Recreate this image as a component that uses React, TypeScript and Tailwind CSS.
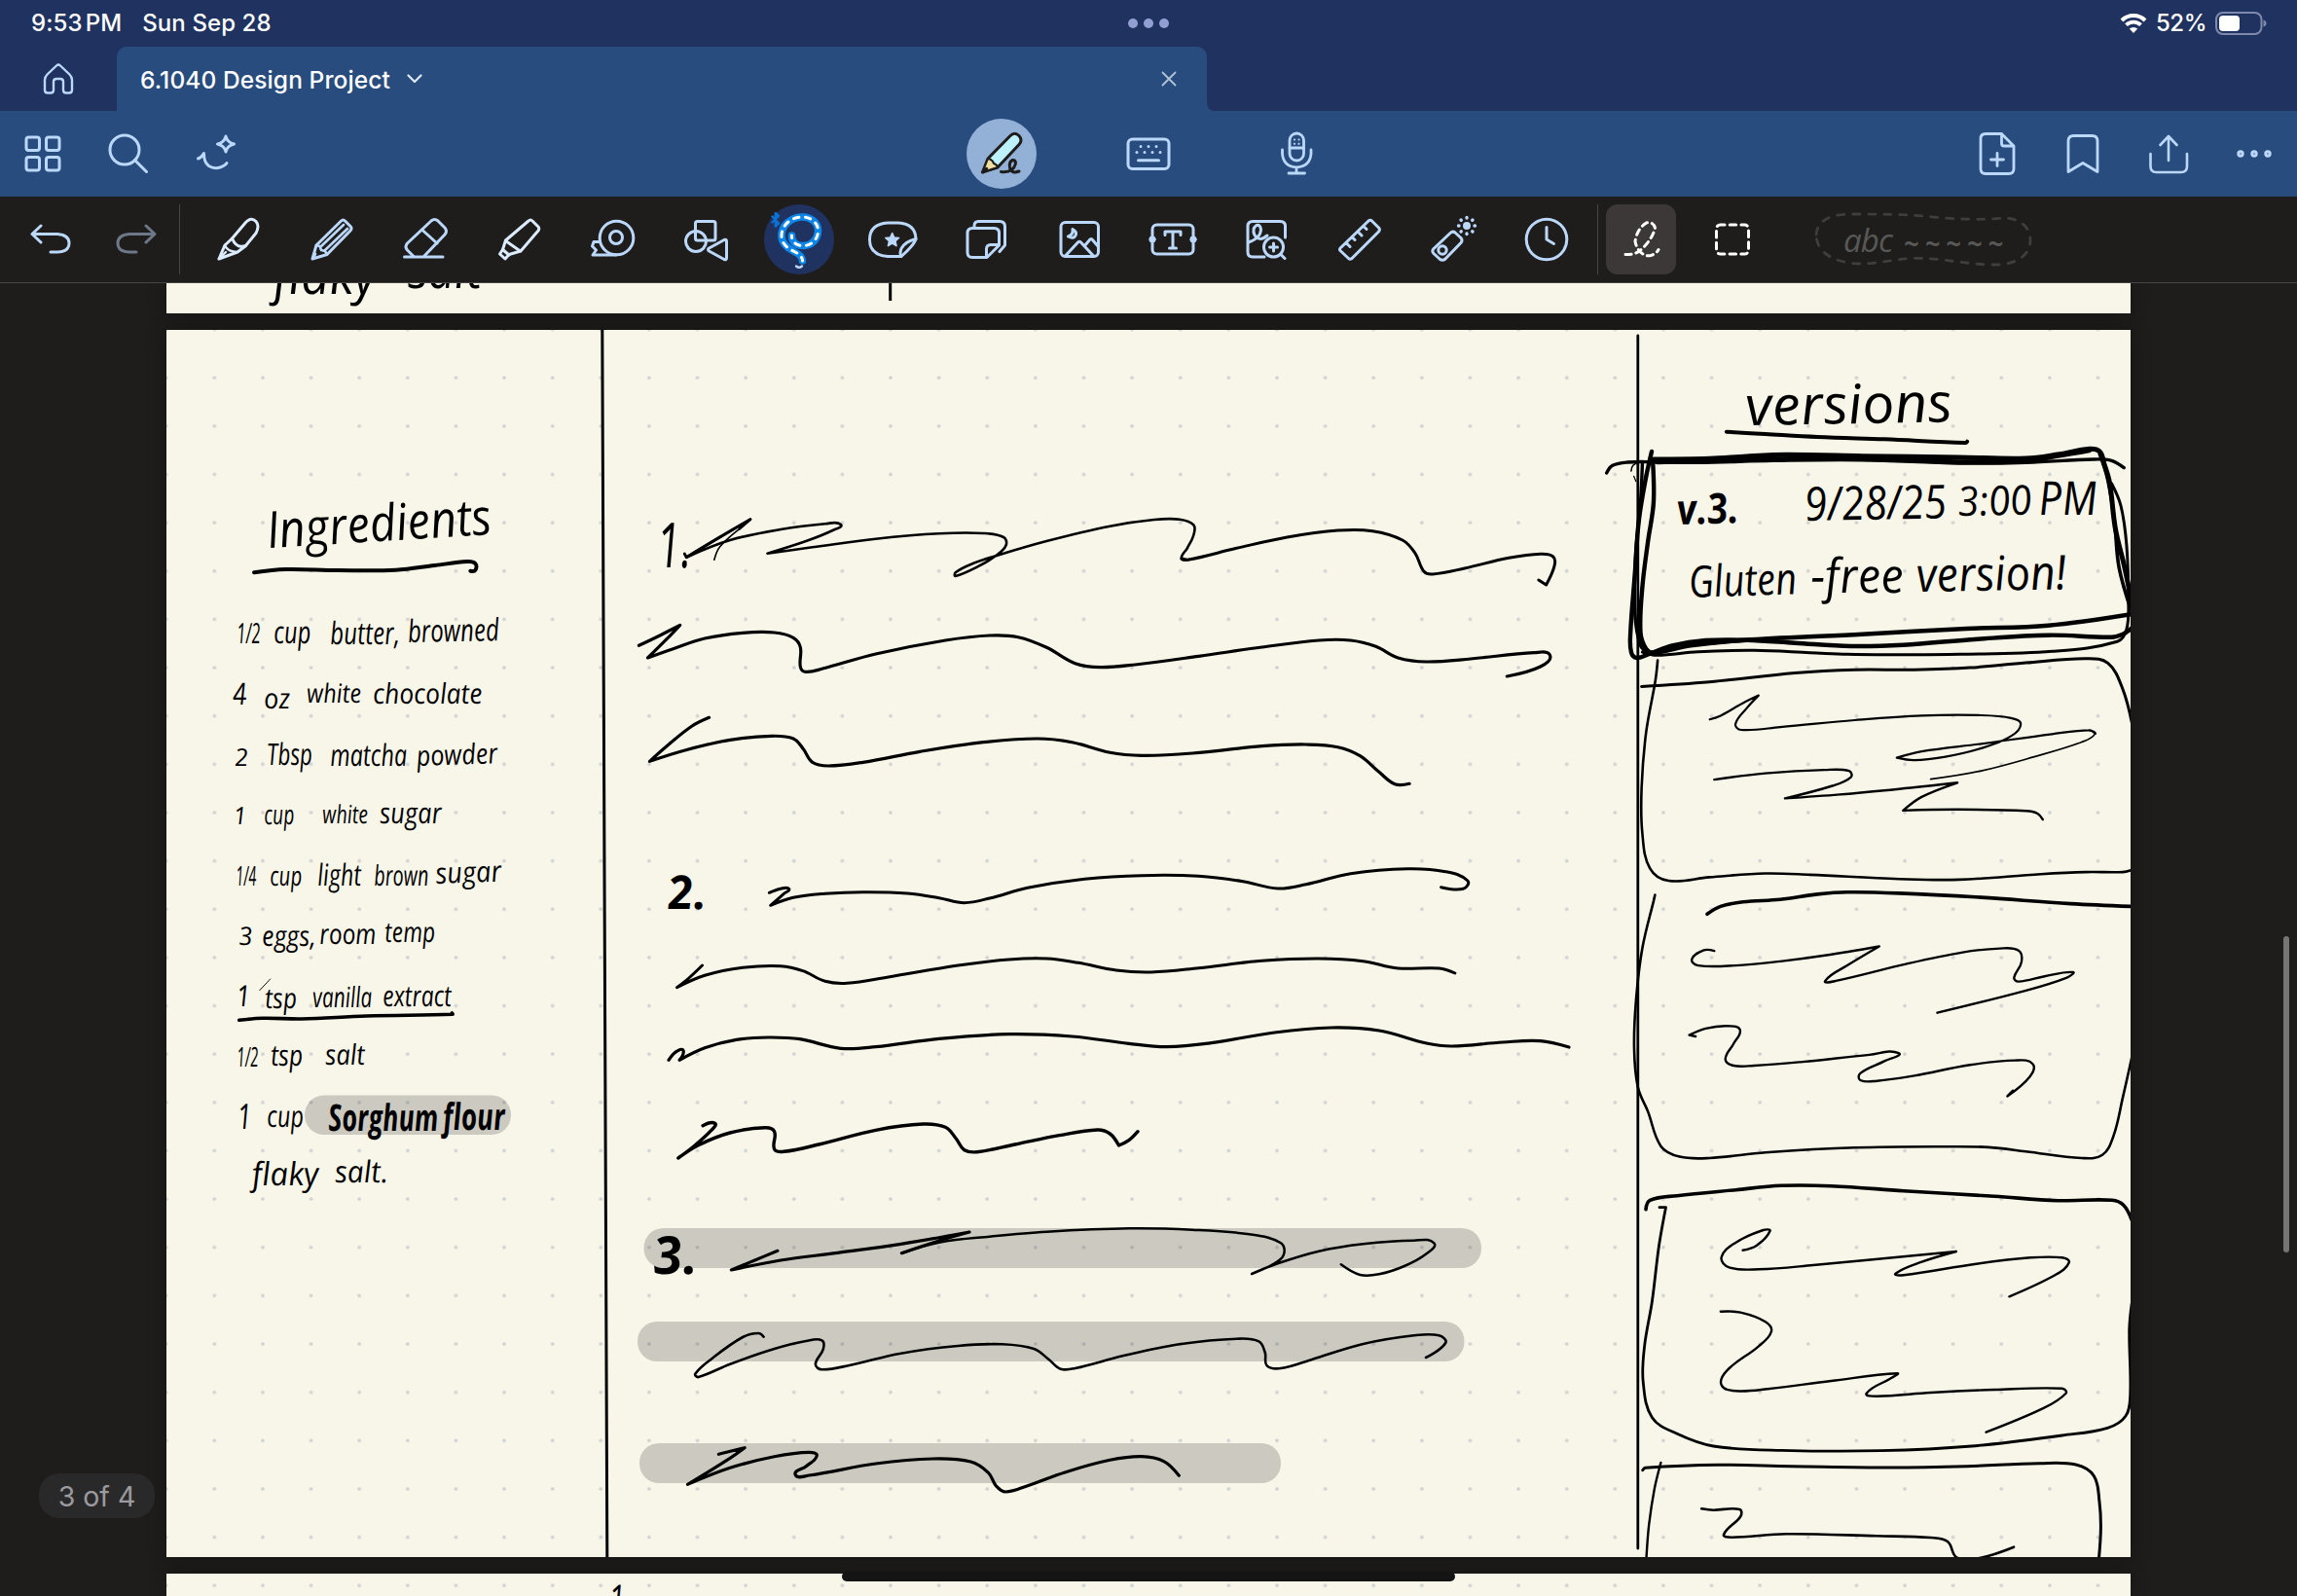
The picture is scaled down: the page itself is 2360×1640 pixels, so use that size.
import React, { useLayoutEffect, useRef, useState } from "react";

type Pt = { x: number; y: number; corner: boolean };
type Stroke = [number, string];
type Patch = { x: number; y: number; sx: number; sy: number; strokes: Stroke[] };
type Word = { t: string; x: number; y: number; size: number; w?: number; bold?: boolean; tilt?: number };

/* Turns a list of pen samples into a smooth curve; "!" after a sample keeps it sharp. */
function inkPath(samples: string, p: Patch): string {
  const pts: Pt[] = samples.trim().split(/\s+/).map((s) => {
    const corner = s.endsWith("!");
    const [a, b] = s.replace("!", "").split(",").map(Number);
    return { x: p.x + a / p.sx, y: p.y + b / p.sy, corner };
  });
  const tangent = (i: number) => {
    const a = pts[Math.max(0, i - 1)];
    const b = pts[Math.min(pts.length - 1, i + 1)];
    if (pts[i].corner || i === 0 || i === pts.length - 1) return { x: 0, y: 0 };
    const l = Math.hypot(b.x - a.x, b.y - a.y) || 1;
    return { x: (b.x - a.x) / l, y: (b.y - a.y) / l };
  };
  let d = `M${pts[0].x.toFixed(1)} ${pts[0].y.toFixed(1)}`;
  for (let i = 0; i < pts.length - 1; i++) {
    const a = pts[i];
    const b = pts[i + 1];
    const k = Math.hypot(b.x - a.x, b.y - a.y) * 0.36;
    const ta = tangent(i);
    const tb = tangent(i + 1);
    d += `C${(a.x + ta.x * k).toFixed(1)} ${(a.y + ta.y * k).toFixed(1)} ${(b.x - tb.x * k).toFixed(1)} ${(b.y - tb.y * k).toFixed(1)} ${b.x.toFixed(1)} ${b.y.toFixed(1)}`;
  }
  return d;
}

const patches: Patch[] = [
  {
    x: 160, y: 480, sx: 3, sy: 3,
    strokes: [[4, "303,325 400,315 560,318 740,317 860,303 960,291 985,297 985,318 970,320"]],
  },
  {
    x: 160, y: 860, sx: 3, sy: 3,
    strokes: [
      [3.6, "257,565 330,559 450,561 650,552 915,547 913,543"],
      [1, "320,473 353,438"],
    ],
  },
  {
    x: 620, y: 500, sx: 1.5373, sy: 3,
    strokes: [
      [1.6, "175,226 184,185 215,130"],
      [2.8, "128,207 131,218! 180,160 232,101!"],
      [2.6, "215,130 232,101! 131,218! 200,165 280,132 350,115 375,117 362,135 320,168 259,206! 330,187 430,161 530,145 600,144 632,156 636,180 622,210 590,248 556,276 556,265 580,240 622,212 700,168 800,122 870,102 910,101 932,118 932,150 922,190 913,222 925,225"],
      [3, "913,222 925,225 1000,190 1080,156 1160,135 1215,137 1262,165 1282,205 1296,262 1310,270 1360,252 1430,220 1480,208 1500,216 1502,245 1489,303! 1477,288"],
      [3.2, "56,490 90,458 121,427! 100,470 70,528! 110,500 160,468 220,451 270,450 300,466 311,495 311,555 319,571 345,562 430,516 540,474 610,459 655,464 700,496 745,545 785,557 840,549 940,523 1040,495 1130,474 1180,474 1220,493 1255,528 1300,540 1370,531 1470,512 1495,520 1480,555 1427,585"],
      [3.2, "167,712 140,738 100,800 73,847! 130,812 200,781 265,769 300,777 316,810 330,850 355,861 410,850 500,817 600,788 685,777 740,788 800,820 850,829 930,822 1040,800 1110,795 1160,803 1195,830 1225,880 1250,917 1273,916"],
    ],
  },
  {
    x: 620, y: 860, sx: 1.5373, sy: 3,
    strokes: [
      [3, "262,172 280,160 293,160 285,175 264,211! 300,187 350,175 410,170 480,174 530,188 570,203 610,189 670,157 760,130 850,119 940,121 1010,137 1065,159 1110,146 1180,113 1270,98 1330,107 1365,135 1358,160 1323,155"],
      [3, "156,396 135,435 116,464! 160,427 220,403 280,398 315,413 350,445 385,451 450,432 560,396 640,378 700,375 750,388 810,411 865,417 940,404 1040,382 1130,375 1200,383 1255,405 1320,405 1345,420"],
      [3.2, "103,688 115,662 126,658 120,688! 160,650 210,625 260,618 310,623 375,652 430,647 530,622 640,608 740,615 830,637 890,647 960,635 1060,603 1150,588 1225,597 1300,636 1340,645 1420,633 1480,629 1525,648"],
      [3.4, "157,890 176,883 170,905 145,950 118,990! 150,950 200,912 255,896 270,908 270,962 285,970 340,948 430,904 505,885 540,895 557,930 570,965 590,971 650,948 720,920 780,903 800,915 814,951! 830,935 844,908"],
    ],
  },
  {
    x: 620, y: 1220, sx: 1.5373, sy: 3,
    strokes: [
      [3.2, "275,196 240,224 202,255! 280,225 370,202 470,175 578,138! 530,165 471,203!"],
      [2.5, "471,203! 530,170 610,152 700,137 830,127 930,131 1020,145 1070,172 1074,210 1055,240 1024,267! 1065,235 1130,197 1200,175 1280,164 1312,172 1300,205 1265,243 1225,268 1195,270 1165,238"],
      [2.6, "253,461 245,450 220,462 170,530 145,575 150,585 200,545 270,498 320,474 345,472 347,500 335,545 345,562 390,548 470,512 560,489 630,484 680,498 703,530 722,560 745,558 820,520 910,484 1000,467 1035,475 1045,510 1048,550 1070,558 1120,530 1200,483 1280,457 1320,457 1330,480 1299,525"],
      [3.2, "182,823 223,803! 200,835 133,916! 200,865 270,830 325,817 337,828 320,860 303,886 325,888 430,852 520,837 580,846 608,880 620,920 635,939 670,920 730,878 800,841 850,830 885,845 909,889"],
    ],
  },
  {
    x: 1630, y: 330, sx: 2.6133, sy: 3,
    strokes: [
      [4, "376,341 480,348 620,357 800,364 1018,375 1022,371"],
      [3.4, "54,468 70,445 110,435 180,434 300,436 500,430 740,428 1000,438 1180,436 1360,426 1410,430 1443,452"],
      [5, "180,426 330,424 430,417 540,412 740,416 1000,420 1180,423 1270,410 1350,394 1378,402 1390,440 1405,500 1420,640 1445,760 1466,880"],
      [5, "190,434 330,430 500,426 740,422 1000,434 1180,430 1270,414 1350,398"],
      [3.6, "1378,410 1400,490 1418,620 1430,760 1465,900"],
      [3, "1410,500 1435,570 1450,690 1455,860 1450,950 1425,988 1250,1018 1000,1027 840,1028 700,1027 600,1022 450,1015 300,1019 190,1030 150,1020"],
      [4.4, "175,402 160,480 140,620 130,780 118,960 120,1020 135,1038 170,1025 230,1000 320,984 430,983 560,992 710,1002 850,998 1050,980 1240,968 1410,974 1440,965 1465,945"],
      [4.4, "178,430 180,560 165,680 150,820 145,960 160,1010 180,1022 280,1000 440,982 740,965 1020,948 1240,938 1465,903"],
      [3.4, "150,440 145,560 132,720 130,900 145,1000 170,1025"],
      [3.4, "180,1022 220,1008 340,992 440,984"],
      [1.6, "145,432 125,445 120,462"],
      [1.2, "127,478 133,494"],
    ],
  },
  {
    x: 1630, y: 660, sx: 2.6133, sy: 2.8,
    strokes: [
      [3, "148,127 330,114 560,88 720,79 880,79 1030,73 1180,59 1340,47 1400,60 1440,135 1465,235"],
      [2.6, "191,52 185,110 160,260 148,420 150,550 170,650 220,686 330,676 480,665 600,669 840,681 1000,683 1220,667 1340,661 1440,661 1465,655"],
      [2.2, "331,222 360,211 420,175 462,153! 430,190 400,235 415,252 520,244 720,224 900,211 1060,210 1140,218 1166,235 1140,270 1060,305 960,330 880,339 833,332! 900,314 1060,292 1250,264 1350,253 1366,263"],
      [1.7, "1350,253 1366,263 1330,287 1200,330 1060,370 924,394"],
      [2.4, "343,395 480,377 640,367 705,370 710,388 660,413 533,449! 680,438 840,422 996,404! 900,445 850,484! 1000,481 1180,485 1210,492 1225,510"],
      [3.6, "324,782 360,760 420,747 520,740 620,725 700,719 840,722 1060,734 1300,752 1465,760"],
      [2.6, "184,727 180,745 150,880 133,1030 128,1170 138,1280 165,1350 200,1450 250,1480 330,1484 480,1468 720,1454 980,1451 1080,1453 1180,1465 1330,1484 1385,1475 1415,1420 1440,1310 1465,1190"],
      [2.4, "343,888 315,886 283,912 300,930 400,930 520,918 640,901 786,875! 700,930 641,974 670,974 860,925 1010,892 1110,881 1160,887 1168,920 1148,965 1160,976 1230,961 1306,949 1290,965 1180,1002 942,1066"],
      [2.4, "293,1134 276,1130! 320,1111 380,1104 412,1115 395,1155 373,1200 395,1218 450,1218 580,1207 760,1187 838,1182 800,1205 735,1240 735,1260 780,1262 880,1247 1030,1216 1150,1203 1198,1213 1190,1250 1130,1306! 1145,1290"],
    ],
  },
  {
    x: 1630, y: 1180, sx: 2.148, sy: 3,
    strokes: [
      [3.6, "131,188 140,160 200,146 330,128 430,115 540,116 700,131 900,148 1040,161 1160,160 1185,175 1203,220"],
      [2.8, "161,182 175,182! 160,300 145,470 128,610 125,720 145,830 200,880 280,918 430,931 650,932 850,918 1050,885 1150,862 1190,825 1200,760 1198,560 1203,480"],
      [2.4, "345,314 375,300 405,255 390,252 330,290 298,335 315,367 380,373 500,360 816,318! 740,350 682,386 700,391 860,356 980,337 1050,337 1065,352 1035,390 933,457"],
      [2.4, "296,503 340,506 395,535 408,565 380,610 310,685 298,730 330,748 400,742 540,717 686,694 670,710 618,755 640,764 760,753 900,744 1050,740 1058,755 1010,800 882,875"],
      [3, "124,992 130,985 290,976 450,980 670,984 840,980 1000,971 1080,975 1120,1010 1132,1090 1135,1170 1131,1264"],
      [2.4, "164,969 150,1050 138,1160 132,1264"],
      [2.6, "254,1111 280,1115 338,1113 340,1135 303,1190 320,1199 440,1189 640,1195 760,1200 797,1212 818,1262 870,1262 943,1229"],
    ],
  },
];

const words: Word[] = [
  { t: "Ingredients", x: 277, y: 563, size: 52, w: 231, tilt: -3.5 },
  { t: "1/2", x: 244, y: 661, size: 29, w: 24 },
  { t: "cup", x: 282, y: 661, size: 32, w: 38 },
  { t: "butter,", x: 340, y: 662, size: 32, w: 72 },
  { t: "browned", x: 420, y: 660, size: 32, w: 94, tilt: -1 },
  { t: "4", x: 240, y: 725, size: 31, w: 14 },
  { t: "oz", x: 272, y: 728, size: 29, w: 27 },
  { t: "white", x: 316, y: 722, size: 27, w: 56 },
  { t: "chocolate", x: 384, y: 723, size: 29, w: 112 },
  { t: "2", x: 242, y: 787, size: 25, w: 14 },
  { t: "Tbsp", x: 275, y: 787, size: 31, w: 47 },
  { t: "matcha", x: 340, y: 788, size: 31, w: 79 },
  { t: "powder", x: 429, y: 787, size: 29, w: 83, tilt: -2 },
  { t: "1", x: 241, y: 847, size: 25, w: 13 },
  { t: "cup", x: 272, y: 847, size: 28, w: 31 },
  { t: "white", x: 332, y: 846, size: 26, w: 47 },
  { t: "sugar", x: 391, y: 847, size: 30, w: 64 },
  { t: "1/4", x: 243, y: 910, size: 28, w: 21 },
  { t: "cup", x: 278, y: 910, size: 28, w: 33 },
  { t: "light", x: 327, y: 911, size: 31, w: 45 },
  { t: "brown", x: 385, y: 910, size: 29, w: 56 },
  { t: "sugar", x: 449, y: 909, size: 30, w: 68, tilt: -2 },
  { t: "3", x: 246, y: 971, size: 26, w: 14 },
  { t: "eggs,", x: 270, y: 972, size: 29, w: 55 },
  { t: "room", x: 329, y: 970, size: 29, w: 58 },
  { t: "temp", x: 396, y: 968, size: 29, w: 52 },
  { t: "1", x: 244, y: 1035, size: 30, w: 14 },
  { t: "tsp", x: 273, y: 1036, size: 29, w: 33 },
  { t: "vanilla", x: 322, y: 1035, size: 29, w: 61 },
  { t: "extract", x: 394, y: 1035, size: 30, w: 71 },
  { t: "1/2", x: 244, y: 1096, size: 28, w: 22 },
  { t: "tsp", x: 279, y: 1096, size: 30, w: 33 },
  { t: "salt", x: 335, y: 1094, size: 29, w: 41 },
  { t: "1", x: 245, y: 1161, size: 36, w: 14 },
  { t: "cup", x: 275, y: 1159, size: 31, w: 38 },
  { t: "Sorghum", x: 338, y: 1162, size: 38, w: 113, bold: true },
  { t: "flour", x: 456, y: 1161, size: 38, w: 64, bold: true },
  { t: "flaky", x: 260, y: 1218, size: 33, w: 69 },
  { t: "salt.", x: 345, y: 1216, size: 31, w: 55 },
  { t: "1.", x: 677, y: 584, size: 64, w: 34 },
  { t: "2.", x: 688, y: 935, size: 48, w: 39, bold: true },
  { t: "3.", x: 673, y: 1309, size: 54, w: 45, bold: true },
  { t: "versions", x: 1796, y: 437, size: 56, w: 212, tilt: -1 },
  { t: "v.3.", x: 1725, y: 539, size: 43, w: 63, bold: true, tilt: -2 },
  { t: "9/28/25", x: 1856, y: 536, size: 48, w: 146, tilt: -1 },
  { t: "3:00", x: 2013, y: 530, size: 42, w: 76, tilt: -1 },
  { t: "PM", x: 2096, y: 530, size: 48, w: 60 },
  { t: "Gluten", x: 1737, y: 614, size: 45, w: 111, tilt: -2 },
  { t: "-free", x: 1862, y: 610, size: 49, w: 96 },
  { t: "version!", x: 1971, y: 609, size: 49, w: 154, tilt: -1 },
];

function HandText({ word, left, top }: { word: Word; left: number; top: number }) {
  const ref = useRef<HTMLSpanElement>(null);
  const [scale, setScale] = useState(1);
  useLayoutEffect(() => {
    if (ref.current && word.w) setScale(word.w / ref.current.offsetWidth);
  }, [word.w]);
  return (
    <span
      ref={ref}
      className={
        "absolute block origin-bottom-left whitespace-pre font-['Open_Sans','Noto_Sans',sans-serif] italic leading-none text-black " +
        (word.bold ? "font-bold" : "font-medium")
      }
      style={{
        left: word.x - left,
        top: word.y - top - word.size * 0.888,
        fontSize: word.size,
        transform: `rotate(${word.tilt ?? 0}deg) scaleX(${scale}) skewX(5deg)`,
      }}
    >
      {word.t}
    </span>
  );
}

function Paper({ id, top, height, words: list, children }: { id: string; top: number; height: number; words: Word[]; children?: React.ReactNode }) {
  return (
    <section
      className="relative w-[2018px] shrink-0 overflow-hidden bg-[#f8f6e9] shadow-[0_0_20px_rgba(0,0,0,0.3)]"
      style={{ height }}
    >
      <svg className="absolute inset-0" width={2018} height={height} viewBox={`171 ${top} 2018 ${height}`} fill="none">
        <defs>
          <pattern id={id} x="145.9" y="313.7" width="49.62" height="49.64" patternUnits="userSpaceOnUse">
            <circle cx="24.81" cy="24.82" r="1.85" fill="#cfd0d1" />
          </pattern>
        </defs>
        <rect x="171" y={top} width="2018" height={height} fill={`url(#${id})`} />
        {children}
      </svg>
      {list.map((w, i) => (
        <HandText key={i} word={w} left={171} top={top} />
      ))}
    </section>
  );
}

function Icon({ children, w = 3, color = "#bbd8fa" }: { children: React.ReactNode; w?: number; color?: string }) {
  return (
    <svg className="block size-[72px] shrink-0" viewBox="0 0 72 72" fill="none" stroke={color} strokeWidth={w} strokeLinecap="round" strokeLinejoin="round">
      {children}
    </svg>
  );
}

const toolIcons: React.ReactNode[] = [
  <g stroke="#dcebfd"><path d="M29.500 35L43.500 18.500Q49 12.500 54 17.500Q58 22 54 29.500L43.500 42.500Q34 46 29.500 35Z" /><path d="M29.500 35L22 42L16 56L35 49L43 43" /><path d="M22 42Q24 48 34 49M16 56L23 49" strokeWidth={2.400} /></g>,
  <g><path d="M16 56L20 42L45.500 17Q47.500 15 49.500 17L55 22.500Q57 24.500 55 27L31 51.500Z" /><path d="M20 42L23.500 43L25 47L29 48L31 51.500M24.500 43.500L48 21M28.500 47.500L52 25M16.500 55.500L19 51" strokeWidth={2.600} /></g>,
  <g><path d="M35 53L56 31Q59 27.500 56 24L49 17Q45.500 14 42 17L17.500 40Q14.500 43.500 17.500 47L23.500 53" /><path d="M32.500 26L48 40M14.500 54H54" /></g>,
  <g stroke="#dcebfd"><path d="M22.500 37L46 17Q48 15 50 17L56 23Q57.500 25 56 27L38 48L26 51.500L22 56L16.500 51L19.500 46.500Z" /><path d="M22.500 37.500L37.500 48M19.500 46.500L26 52" /></g>,
  <g><circle cx="40.500" cy="34.500" r="17.300" /><circle cx="40" cy="34" r="6.500" /><path d="M40 52H16L19.500 47L15.500 43L17 38.500H23.500" /></g>,
  <g><rect x="25.500" y="17.500" width="20.500" height="19.500" rx="2" /><circle cx="26" cy="38" r="10.500" /><path d="M55 36.500L39.500 45Q37.500 46.500 39.500 48L55 56.500Q57.500 57.500 57.500 55V38Q57.500 35.500 55 36.500Z" /></g>,
  null,
  <g><path d="M31 19H42Q59.500 20 60 35.500Q58 42 45 53.500H31Q12.500 52 12.500 36.200T31 19Z" /><path d="M45 53.500Q43 51 45 45.500Q49 38 60 35.500" /><path d="M35.700 29.500l2.100 4.500 4.800.5-3.600 3.300 1 4.900-4.300-2.500-4.300 2.500 1-4.900-3.600-3.300 4.800-.5z" fill="#bbd8fa" strokeWidth={1.500} /></g>,
  <g><path d="M24 24V22Q24 17.500 28.500 17.500H50Q55.500 17.500 55.500 23V42L50 48.500" /><path d="M22 24.500H44.500Q49.500 24.500 49.500 29.500V42L37 54.500H22Q17 54.500 17 49.500V29.500Q17 24.500 22 24.500ZM36.500 54V46Q36.500 41.500 41 41.500H49.500" /></g>,
  <g><rect x="17" y="18.500" width="38.500" height="35" rx="4.500" /><path d="M29 25.500Q34 28 32 32T24.500 33Q30 31 29 25.500ZM21.500 53L34.500 39Q36 37.500 37.500 39L50.500 53M41.500 42.500L46.500 36.500Q48 34.500 49.500 36.500L55 43" /></g>,
  <g><rect x="15" y="21" width="42" height="30" rx="4.500" /><circle cx="15" cy="36" r="3.200" fill="#bbd8fa" strokeWidth={1} /><circle cx="57" cy="36" r="3.200" fill="#bbd8fa" strokeWidth={1} /><path d="M28 31.500V28H44V31.500M36 28V45M32.500 45H39.500" /></g>,
  <g><path d="M55.500 34V22.500Q55.500 17.500 50.500 17.500H22Q17 17.500 17 22.500V49Q17 54 22 54H34" /><path d="M17.500 39Q30 35 30.500 26Q30 20.500 26 21.500Q21 25 24 31.500Q29 39 37 32" /><circle cx="43.500" cy="44" r="10" /><path d="M50.500 51L55 55.500M43.500 40V48M39.500 44H47.500" /></g>,
  <g><path d="M16 45L45 17Q47 15.500 48.500 17L56 24.500Q57 26 55.500 28L28 55.500Q26 57 24.500 55.500L16 47.500Q15 46.500 16 45ZM22 39.500L26 43.500M28 33.500L31 36.500M34 28L38 32M40 22.500L43 25.500" /></g>,
  <g><path d="M15.500 46L33 29.500Q35.500 27 38 29L44 34.500Q46 37 44 39.500L28 56Q25 58.500 22 56L16 50.500Q14 48.500 15.500 46Z" /><circle cx="25" cy="47" r="4.200" /><circle cx="50" cy="22" r="3" fill="#bbd8fa" strokeWidth={2} /><path d="M50 13.500V14M50 30V30.500M41.500 22H42M58 22H58.500M44 16L44.300 16.300M56 16L55.700 16.300M44 28L44.300 27.700M56 28L55.700 27.700" strokeWidth={3.400} /></g>,
  <g><circle cx="36" cy="36" r="20.800" /><path d="M36 23.500V36L43.500 40.500" /></g>,
];

function LassoTool() {
  const loop = "M28.500 32C28 38 33 43 41 42.500C49 42 55 36 55.500 28C56 19 48 12.500 38.500 13C27 13.500 17.500 22 18 33C18.500 41 24 45 31 48.500C36 51 39.500 54 39.500 58";
  return (
    <div className="relative size-[72px] rounded-full bg-[#20325f]">
      <Icon>
        <path d={loop} stroke="#0d86ea" strokeWidth={7.500} />
        <path d={loop} stroke="#fff" strokeWidth={3} strokeDasharray="5.500 6.500" strokeDashoffset="-9" />
        <path d="M33 63.500Q36 66 39 63.500" stroke="#bbd8fa" strokeWidth={2.400} />
        <path d="M8.500 12.500L15 19.500L11.800 22.500V9L15 12L8.500 18.500" stroke="#0a72d4" strokeWidth={2.400} />
      </Icon>
    </div>
  );
}

function Cell({ children }: { children: React.ReactNode }) {
  return <button className="flex h-[88px] w-[88px] shrink-0 items-center justify-center">{children}</button>;
}

export default function App() {
  return (
    <div className="flex h-[1640px] w-[2360px] flex-col overflow-hidden bg-[#1e1d1b] font-['Inter','Liberation_Sans',sans-serif]">
      <header className="flex shrink-0 flex-col bg-[#20325f] text-white">
        <div className="flex h-12 items-center justify-between pl-8 pr-[31px]">
          <div className="flex w-[1100px] items-center gap-[21px] text-[24px] font-medium leading-none">
            <span className="tracking-[0.1px]">9:53<span className="ml-[3px]">PM</span></span>
            <span className="tracking-[0.1px]">Sun Sep 28</span>
          </div>
          <div className="flex gap-1.5">
            <i className="size-2.5 rounded-full bg-[#929fd2]" />
            <i className="size-2.5 rounded-full bg-[#929fd2]" />
            <i className="size-2.5 rounded-full bg-[#929fd2]" />
          </div>
          <div className="flex w-[1101px] items-center justify-end gap-[9px]">
            <svg className="h-[22px] w-[28px]" viewBox="0 0 28 22" fill="none">
              <path d="M2 8A17 17 0 0 1 26 8" stroke="#fff" strokeWidth="4" />
              <path d="M6.500 12.700A10.600 10.600 0 0 1 21.500 12.700" stroke="#fff" strokeWidth="3.800" />
              <path d="M14 21L9.800 16.600A6 6 0 0 1 18.200 16.600Z" fill="#fff" />
            </svg>
            <span className="text-[24px] font-medium leading-none tracking-[-0.5px]">52%</span>
            <svg className="h-[24px] w-[53px]" viewBox="0 0 53 24" fill="none">
              <rect x="1" y="1" width="46.500" height="22" rx="7" stroke="#7e89ab" strokeWidth="2" />
              <rect x="4" y="4" width="21" height="16" rx="4" fill="#fff" />
              <path d="M49.500 8.500Q52.500 9.500 52.500 12T49.500 15.500Z" fill="#7e89ab" />
            </svg>
          </div>
        </div>
        <div className="flex h-[66px]">
          <button className="flex w-[120px] items-center justify-center">
            <Icon w={2.400}>
              <path d="M34 22.500L24.500 31.500Q22 34 22 37V47.500Q22 50.500 25 50.500H28Q31 50.500 31 47.500V39Q31 36 34 36H38Q41 36 41 39V47.500Q41 50.500 44 50.500H47Q50 50.500 50 47.500V37Q50 34 47.500 31.500L38 22.500Q36 20.500 34 22.500Z" />
            </Icon>
          </button>
          <div className="flex w-[1120px] items-center justify-between rounded-t-[10px] bg-[#284c7e] pl-6 pr-[31px]">
            <div className="flex items-center gap-[17px]">
              <span className="pt-0.5 text-[24.500px] font-medium leading-none tracking-[0.1px]">6.1040 Design Project</span>
              <svg className="h-[10px] w-[16px]" viewBox="0 0 16 10" fill="none" stroke="#dfe9f8" strokeWidth="2.200" strokeLinecap="round" strokeLinejoin="round"><path d="M1.500 1.500L8 8L14.500 1.500" /></svg>
            </div>
            <svg className="size-[16px]" viewBox="0 0 16 16" fill="none" stroke="#b4c2d8" strokeWidth="1.800" strokeLinecap="round"><path d="M1.500 1.500L14.500 14.500M14.500 1.500L1.500 14.500" /></svg>
          </div>
          <div className="w-2 bg-[#284c7e]"><div className="h-full rounded-bl-[8px] bg-[#20325f]" /></div>
        </div>
        <nav className="flex h-[88px] items-center justify-between bg-[#284c7e]">
          <div className="flex w-[352px]">
            <Cell><Icon><rect x="19" y="19" width="13.500" height="13.500" rx="2.500" /><rect x="39.500" y="19" width="13.500" height="13.500" rx="2.500" /><rect x="19" y="39.500" width="13.500" height="13.500" rx="2.500" /><rect x="39.500" y="39.500" width="13.500" height="13.500" rx="2.500" /></Icon></Cell>
            <Cell><Icon><circle cx="32" cy="32" r="15" /><path d="M42.500 42.500L54.500 54.500" /></Icon></Cell>
            <Cell><Icon><path d="M19.500 41Q23.500 39.500 25.500 35.500Q25.500 45 30.500 48.500Q36 52 42 50Q47.500 48 49 45.500" /><path d="M48 18Q49.500 24.500 56.500 26Q49.500 27.500 48 34Q46.500 27.500 39.500 26Q46.500 24.500 48 18Z" /></Icon></Cell>
          </div>
          <div className="flex items-center gap-[79.500px]">
            <button className="size-[72px] rounded-full bg-[#93b0d7]">
              <Icon color="#1e1d1b" w={3}>
                <path d="M16.500 55L22 41L45 17.500Q49.500 13 54 17.500Q58 22 54 26.500L32 50Z" fill="#bdf1fd" />
                <path d="M16.500 55L22 41Q27 42 28 46Q31.500 47 32 50Z" fill="#efe0a0" strokeWidth={2} />
                <path d="M17 54.500L20.500 51.500" strokeWidth={3.500} />
                <path d="M35.500 54.500Q48 56 50.500 46Q50.500 42.500 47.500 42.500Q43.500 44 44.500 50Q46 57 54 54" />
              </Icon>
            </button>
            <button className="size-[72px]">
              <Icon>
                <rect x="15" y="21" width="42" height="30.500" rx="4.500" />
                <path d="M25.500 42.800H46.500" />
                <path d="M28 28.500h.01M36 28.500h.01M44 28.500h.01M24 34.500h.01M32 34.500h.01M40 34.500h.01M48 34.500h.01" />
              </Icon>
            </button>
            <button className="size-[72px]">
              <Icon w={2.800}>
                <rect x="29" y="15" width="14.500" height="28" rx="7.250" />
                <path d="M21.500 32V36Q22.500 49 36 50Q50 49 51 36V32M36 50V55.500M28 56H44.500M29 30H43" />
                <path d="M34 21.500h.01M38.500 21.500h.01M34 25.800h.01M38.500 25.800h.01" strokeWidth={2.200} />
              </Icon>
            </button>
          </div>
          <div className="flex w-[352px]">
            <Cell><Icon w={2.800}><path d="M40.500 15.500H24Q19 15.500 19 20.500V51.500Q19 56.500 24 56.500H48Q53 56.500 53 51.500V28ZM40.500 15.500V25.500Q40.500 28 43 28H53M36 35.500V48.500M29.500 42H42.500" /></Icon></Cell>
            <Cell><Icon w={2.800}><path d="M21 54.500V23Q21 17.500 26.500 17.500H45.500Q51 17.500 51 23V54.500L36 45.500Z" /></Icon></Cell>
            <Cell><Icon w={2.600}><path d="M17.500 36V49Q17.500 55 23.500 55H49Q55 55 55 49V36M36 43V18M27.500 27L36 18L44.500 27" /></Icon></Cell>
            <Cell><Icon><circle cx="22" cy="36" r="2.200" /><circle cx="36" cy="36" r="2.200" /><circle cx="50" cy="36" r="2.200" /></Icon></Cell>
          </div>
        </nav>
      </header>

      <div className="flex h-[89px] shrink-0 items-center border-b border-[#474443] bg-[#1e1d1b]">
        <div className="flex h-[72px] w-[184px] items-center gap-4 pl-4">
          <Icon><path d="M26 22L17 30.500L26 39M17.500 30.500H43Q55 31.500 55 40T43 49H36" /></Icon>
          <Icon color="#6d7888"><path d="M46 22L55 30.500L46 39M54.500 30.500H29Q17 31.500 17 40T29 49H36" /></Icon>
        </div>
        <div className="h-[72px] w-px bg-[#474443]" />
        <div className="flex pl-3">
          {toolIcons.map((ic, i) => (
            <button key={i} className="flex h-[72px] w-24 items-center justify-center">
              {ic ? <Icon>{ic}</Icon> : <LassoTool />}
            </button>
          ))}
        </div>
        <div className="ml-1 h-[72px] w-px bg-[#474443]" />
        <button className="ml-2 size-[72px] rounded-xl bg-[#3c3837]">
          <Icon color="#fff"><path d="M20 51.500Q29 52 35 47.500Q47 37 50.500 24.500Q49 17.500 41.500 19Q32 25 30 38Q31 44 35 48.500Q40 54 46 52.500Q52 50.500 54 46.500" strokeDasharray="6 5" /></Icon>
        </button>
        <button className="ml-[22px] size-[72px]">
          <Icon color="#fff"><rect x="19.500" y="21" width="33" height="30" rx="4" strokeDasharray="6.500 5.200" strokeDashoffset="2" /></Icon>
        </button>
        <div className="relative ml-[44px] flex h-[64px] w-[232px] items-center gap-[12px] pl-[34px] font-['Open_Sans',sans-serif] italic text-[#585857]">
          <svg className="absolute inset-0 h-[64px] w-[232px]" viewBox="0 0 232 64" fill="none" stroke="#403d3c" strokeWidth="2.800" strokeLinecap="round" strokeDasharray="7 9">
            <path d="M6 27C7 14 18 6 42 6C70 6 96 6 123 8.700C150 11.500 175 12 196 10.300C216 9 226 20 226 33C226 48 212 58 190 58C160 58 136 51 108 51.300C86 52 70 57 52 57C26 57 6 46 6 27Z" />
          </svg>
          <span className="text-[33px] font-medium leading-none tracking-[-0.800px]">abc</span>
          <span className="pt-1.5 text-[27px] font-bold not-italic leading-none tracking-[6.200px]">~~~~~</span>
        </div>
      </div>

      <main className="relative flex h-[1349px] flex-col items-center gap-[17px] overflow-hidden bg-[#1e1d1b]">
        <Paper id="dots-a" top={291} height={31} words={[{ t: "flaky", x: 282, y: 302, size: 52, w: 106 }, { t: "salt", x: 420, y: 296, size: 52, w: 76 }]}>
          <path d="M914.700 280V309" stroke="#000" strokeWidth="3" />
        </Paper>
        <Paper id="dots-b" top={339} height={1261} words={words}>
          <g fill="#000" fillOpacity={0.175}>
            <rect x="313" y="1125.500" width="212" height="40.500" rx="20" />
            <rect x="661.500" y="1262" width="860.500" height="41" rx="20" />
            <rect x="655" y="1358" width="849.500" height="41" rx="20" />
            <rect x="657" y="1483" width="659" height="41" rx="20" />
          </g>
          <path d="M618.800 339L621 900L623.800 1600" stroke="#000" strokeWidth="3" />
          <path d="M1682.800 345V1591" stroke="#000" strokeWidth="2.800" strokeLinecap="round" />
          <g stroke="#000" strokeLinecap="round" strokeLinejoin="round">
            {patches.flatMap((p, i) => p.strokes.map(([w, s], j) => <path key={`${i}-${j}`} d={inkPath(s, p)} strokeWidth={w} />))}
          </g>
        </Paper>
        <Paper id="dots-c" top={1617} height={23} words={[{ t: "1", x: 627, y: 1658, size: 40, w: 16 }]} />
        <div className="absolute left-[40px] top-[1223px] flex h-[46px] w-[119px] items-center justify-center rounded-[21px] bg-[#2a2929] pt-0.5 text-[28.500px] leading-none text-[#9b9a9f]">3 of 4</div>
        <div className="absolute right-2 top-[671px] h-[325px] w-1.5 rounded-full bg-[#767574]" />
        <div className="absolute left-[865px] top-[1324px] h-[10px] w-[630px] rounded-full bg-[#141414]" />
      </main>
    </div>
  );
}
